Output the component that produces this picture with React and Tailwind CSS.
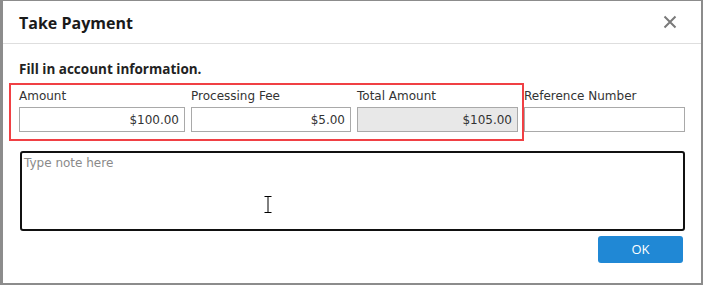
function Field(props) {
    return <div className={"flex flex-col " + props.width}>
        <label className="text-[12px] leading-[14px] text-[#333] mb-[4px] whitespace-nowrap">{props.label}</label>
        <div className={"h-[25px] border border-[#a9a9a9] flex items-center justify-end pr-[5px] text-[12px] text-[#333] " + (props.disabled ? "bg-[#e8e8e8]" : "bg-white")}>
            {props.value}
        </div>
    </div>
}

export default function App() {
    return <div className="w-[703px] h-[285px] bg-[#8c8c8c] pl-[3px] pr-[2px] pt-[1px] pb-[2px]" style={{ fontFamily: "'DejaVu Sans', Verdana, sans-serif" }}>
        <div className="relative h-full bg-white flex flex-col">
            <div className="h-[43px] flex items-center justify-between border-b border-[#dedede] pl-[16px] pr-[24px]">
                <div className="text-[16px] font-bold text-[#1a1a1a] pt-[1px]" style={{ fontFamily: "'Open Sans', sans-serif" }}>Take Payment</div>
                <svg width="14" height="14" viewBox="0 0 14 14" className="text-[#7a7a7a]">
                    <path d="M1.5 1.5 L12.5 12.5 M12.5 1.5 L1.5 12.5" stroke="currentColor" strokeWidth="2" />
                </svg>
            </div>
            <div className="pl-[16px] pr-[16px] pt-[16px]">
                <div className="text-[13.5px] font-bold text-[#222] leading-[18px]" style={{ fontFamily: "'Open Sans', sans-serif" }}>Fill in account information.</div>
                <div className="relative mt-[11px] flex gap-[6px]">
                    <Field label="Amount" value="$100.00" width="w-[166px]" />
                    <Field label="Processing Fee" value="$5.00" width="w-[160px]" />
                    <Field label="Total Amount" value="$105.00" width="w-[161px]" disabled />
                    <Field label="Reference Number" value="" width="w-[161px]" />
                    <div className="absolute left-[-10px] top-[-6px] w-[515px] h-[58px] border-2 border-[#f04044] pointer-events-none"></div>
                </div>
                <div className="relative mt-[19px] ml-[1px] w-[665px] h-[80px] border-2 border-[#111] rounded-[3px] px-[2px] pt-[1px] text-[12px] text-[#8a8a8a]">
                    Type note here
                    <svg width="8" height="17" viewBox="0 0 8 17" className="absolute left-[242px] top-[43px]">
                        <path d="M0.5 0.5 H7.5 M4 0.5 V16.5 M0.5 16.5 H7.5" stroke="#000" strokeWidth="1" fill="none" />
                    </svg>
                </div>
                <div className="flex justify-end mt-[5px] pr-[2px]">
                    <div className="w-[85px] h-[27px] bg-[#2088d5] rounded-[3px] text-white text-[13px] flex items-center justify-center" style={{ fontFamily: "'Open Sans', sans-serif" }}>OK</div>
                </div>
            </div>
        </div>
    </div>
}
